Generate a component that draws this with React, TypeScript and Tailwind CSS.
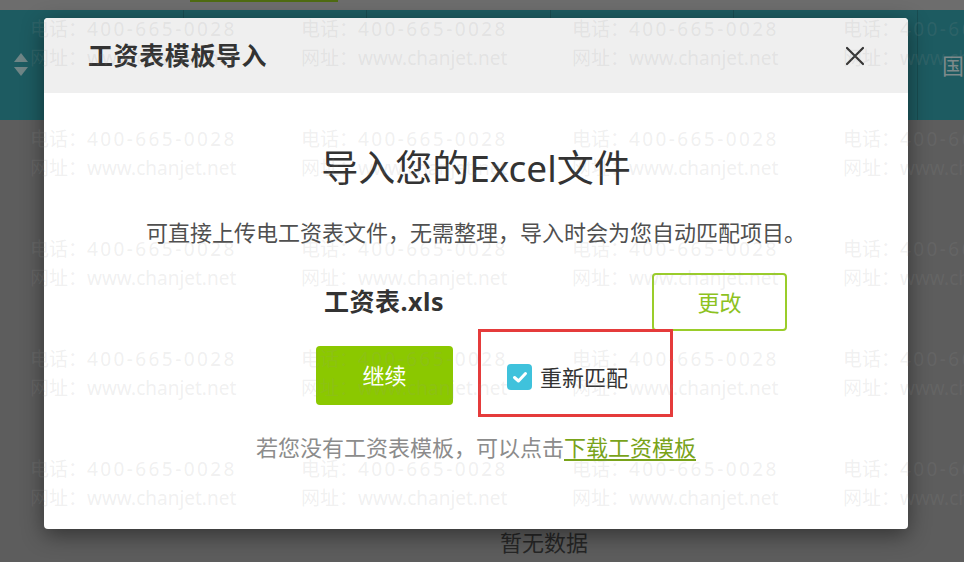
import React from "react";

const FONT = "font-['Noto_Sans','Noto_Sans_CJK_SC',sans-serif]";

const WM_ROWS = [0, 1, 2, 3, 4, 5];
const WM_COLS = [0, 1, 2, 3];

const Watermark: React.FC = () => (
  <div className="pointer-events-none absolute inset-0 overflow-hidden pl-[30px] pt-[15px] text-[19px] leading-[29px] text-[rgba(150,150,150,0.15)]">
    {WM_ROWS.map((r) => (
      <div key={r} className="flex h-[110px]">
        {WM_COLS.map((c) => (
          <div key={c} className="w-[271px] shrink-0 whitespace-nowrap">
            <div>
              电话：<span className="tracking-[2.4px]">400-665-0028</span>
            </div>
            <div>网址：www.chanjet.net</div>
          </div>
        ))}
      </div>
    ))}
  </div>
);

const SortIcon: React.FC = () => (
  <svg width="16" height="26" viewBox="0 0 16 26" className="text-[#6f8586]">
    <path d="M8 1 L15 10 L1 10 Z" fill="currentColor" />
    <path d="M1 15 L15 15 L8 24 Z" fill="currentColor" />
  </svg>
);

const CloseIcon: React.FC = () => (
  <svg width="20" height="20" viewBox="0 0 20 20">
    <path d="M2 2 L18 18 M18 2 L2 18" stroke="#333" strokeWidth="2.2" strokeLinecap="round" />
  </svg>
);

const CheckBox: React.FC = () => (
  <span className="flex h-[26px] w-[25px] items-center justify-center rounded-[4px] bg-[#3fc2dc]">
    <svg width="18" height="18" viewBox="0 0 18 18">
      <path d="M3.5 9.5 L7.5 13 L14.5 5.5" fill="none" stroke="#fff" strokeWidth="3" strokeLinecap="round" strokeLinejoin="round" />
    </svg>
  </span>
);

export default function App() {
  return (
    <div className={`relative h-[562px] w-[964px] overflow-hidden bg-[#5d5d5d] ${FONT}`}>
      {/* dimmed page underneath */}
      <div className="h-[10px] bg-[#6d6d6d]">
        <div className="ml-[190px] h-[2px] w-[148px] bg-[#4f6b12]" />
      </div>
      <div className="flex h-[110px] bg-[#1d5b61]">
        <div className="flex w-[184px] items-center border-r border-[#194d52] pl-[13px]">
          <SortIcon />
        </div>
        <div className="w-[184px] border-r border-[#194d52]" />
        <div className="w-[184px] border-r border-[#194d52]" />
        <div className="w-[184px] border-r border-[#194d52]" />
        <div className="w-[184px] border-r border-[#194d52]" />
        <div className="flex flex-1 items-center pl-[24px] text-[22px] text-[#7d8a8b]">国</div>
      </div>
      <div className="flex justify-center pl-[124px] pt-[407px] text-[22px] leading-[30px] text-[#262626]">
        暂无数据
      </div>

      {/* modal */}
      <div className="absolute left-[44px] top-[18px] h-[511px] w-[864px] overflow-hidden rounded-[4px] bg-white shadow-[0_6px_22px_rgba(0,0,0,0.45)]">
        <div className="flex h-[75px] items-center justify-between bg-[#efefef] pl-[44px] pr-[43px]">
          <h2 className="text-[25px] font-bold leading-none tracking-[0.6px] text-[#333]">工资表模板导入</h2>
          <CloseIcon />
        </div>

        <div className="pt-[53px]">
          <h1 className="text-center text-[37px] leading-[44px] text-[#333]">导入您的Excel文件</h1>
          <p className="mt-[27px] text-center text-[22px] leading-[30px] text-[#505050]">
            可直接上传电工资表文件，无需整理，导入时会为您自动匹配项目。
          </p>

          <div className="ml-[272px] mt-[26px] w-[471px]">
            <div className="flex h-[58px] items-center justify-between">
              <span className="pl-[8px] text-[25px] font-bold tracking-[0.5px] text-[#333]">工资表.xls</span>
              <button className="flex h-[58px] w-[135px] items-center justify-center rounded-[4px] border-2 border-[#9acd2a] text-[22px] text-[#8dc21f]">
                更改
              </button>
            </div>
            <div className="mt-[-2px] flex items-start">
              <button className="mt-[17px] flex h-[59px] w-[137px] items-center justify-center rounded-[4px] bg-[#8bc800] text-[22px] text-white">
                继续
              </button>
              <div className="ml-[25px] flex h-[88px] w-[195px] items-center border-[3px] border-[#e53b3b] pl-[26px] pt-[8px]">
                <CheckBox />
                <span className="ml-[8px] text-[22px] leading-[30px] text-[#333]">重新匹配</span>
              </div>
            </div>
          </div>

          <p className="mt-[15px] text-center text-[22px] leading-[30px] text-[#8c8c8c]">
            若您没有工资表模板，可以点击
            <a className="text-[#79a31a] underline underline-offset-[3px]">下载工资模板</a>
          </p>
        </div>
      </div>

      <Watermark />
    </div>
  );
}
